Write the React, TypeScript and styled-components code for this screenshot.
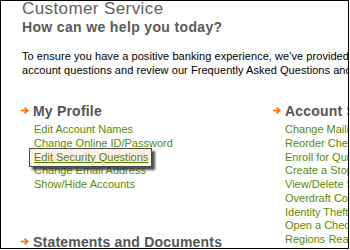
import React from "react";
import styled, { createGlobalStyle } from "styled-components";

const Global = createGlobalStyle`
  html, body { margin: 0; padding: 0; background: #fff; }
  body { font-family: "Liberation Sans", Arial, sans-serif; }
`;

const Frame = styled.div`
  box-sizing: border-box;
  width: 349px;
  height: 249px;
  border: 1px solid #000;
  overflow: hidden;
  background: #fff;
  padding: 1px 0 0 20px;
`;

const Title = styled.h1`
  margin: 0 0 0 1px;
  font-size: 17px;
  line-height: 14px;
  letter-spacing: 0.4px;
  font-weight: normal;
  color: #5f5f5f;
  white-space: nowrap;
`;

const Subtitle = styled.h2`
  margin: 3px 0 0 1px;
  font-size: 14px;
  line-height: 16px;
  letter-spacing: 0.35px;
  font-weight: bold;
  color: #5a5a5a;
  white-space: nowrap;
`;

const Intro = styled.p`
  margin: 15.3px 0 0 1px;
  font-size: 11px;
  line-height: 13.5px;
  letter-spacing: 0.06px;
  color: #000;
  white-space: nowrap;
`;

const Columns = styled.div`
  display: grid;
  grid-template-columns: 252px 300px;
  margin-top: 25.6px;
`;

const Column = styled.div`
  display: flex;
  flex-direction: column;
`;

const Heading = styled.h3<{ $gap?: number }>`
  display: flex;
  align-items: center;
  gap: 4px;
  margin: ${(p) => p.$gap ?? 0}px 0 0 0;
  font-size: 14px;
  line-height: 16px;
  letter-spacing: 0.2px;
  font-weight: bold;
  color: #555;
  white-space: nowrap;
`;

const LinkList = styled.ul<{ $indent: number }>`
  list-style: none;
  margin: 4.2px 0 0 0;
  padding: 0 0 0 ${(p) => p.$indent}px;
`;

const Item = styled.li`
  font-size: 11px;
  line-height: 13.75px;
  white-space: nowrap;
`;

const Link = styled.a<{ $active?: boolean }>`
  color: #5b8a00;
  text-decoration: ${(p) => (p.$active ? "underline" : "none")};
  cursor: pointer;
  ${(p) =>
    p.$active
      ? `
    display: inline-block;
    position: relative;
    z-index: 1;
    padding: 2px 3px 2px 4px;
    margin: -3px -4px -3px -5px;
    background: #fff0e8;
    border: 1px solid #4a4a4a;
    box-shadow: 3px 3px 2px rgba(40, 40, 40, 0.8);
    color: #557f00;
  `
      : ""}
`;

const Arrow = () => (
  <svg width="8" height="7" viewBox="0 0 8 7" style={{ flex: "none" }}>
    <path d="M0 3.5 H6" stroke="#ff6600" strokeWidth="1.6" fill="none" />
    <path d="M3.6 0.6 L6.7 3.5 L3.6 6.4" stroke="#ff6600" strokeWidth="1.6" fill="none" />
  </svg>
);

const profileLinks = [
  "Edit Account Names",
  "Change Online ID/Password",
  "Edit Security Questions",
  "Change Email Address",
  "Show/Hide Accounts",
];

const serviceLinks = [
  "Change Mailing Address",
  "Reorder Checks",
  "Enroll for Quicken/QuickBooks",
  "Create a Stop Payment",
  "View/Delete Stop Payments",
  "Overdraft Coverage",
  "Identity Theft Protection",
  "Open a Checking Account",
  "Regions Ready Advance",
];

export default function App() {
  return (
    <>
      <Global />
      <Frame>
        <Title>Customer Service</Title>
        <Subtitle>How can we help you today?</Subtitle>
        <Intro>
          To ensure you have a positive banking experience, we've provided tools to help you manage your
          <br />
          account questions and review our Frequently Asked Questions and answers.
        </Intro>
        <Columns>
          <Column>
            <Heading>
              <Arrow />
              My Profile
            </Heading>
            <LinkList $indent={13}>
              {profileLinks.map((l) => (
                <Item key={l}>
                  <Link $active={l === "Edit Security Questions"}>{l}</Link>
                </Item>
              ))}
            </LinkList>
            <Heading $gap={42}>
              <Arrow />
              Statements and Documents
            </Heading>
          </Column>
          <Column>
            <Heading>
              <Arrow />
              Account Services
            </Heading>
            <LinkList $indent={12}>
              {serviceLinks.map((l) => (
                <Item key={l}>
                  <Link>{l}</Link>
                </Item>
              ))}
            </LinkList>
          </Column>
        </Columns>
      </Frame>
    </>
  );
}
